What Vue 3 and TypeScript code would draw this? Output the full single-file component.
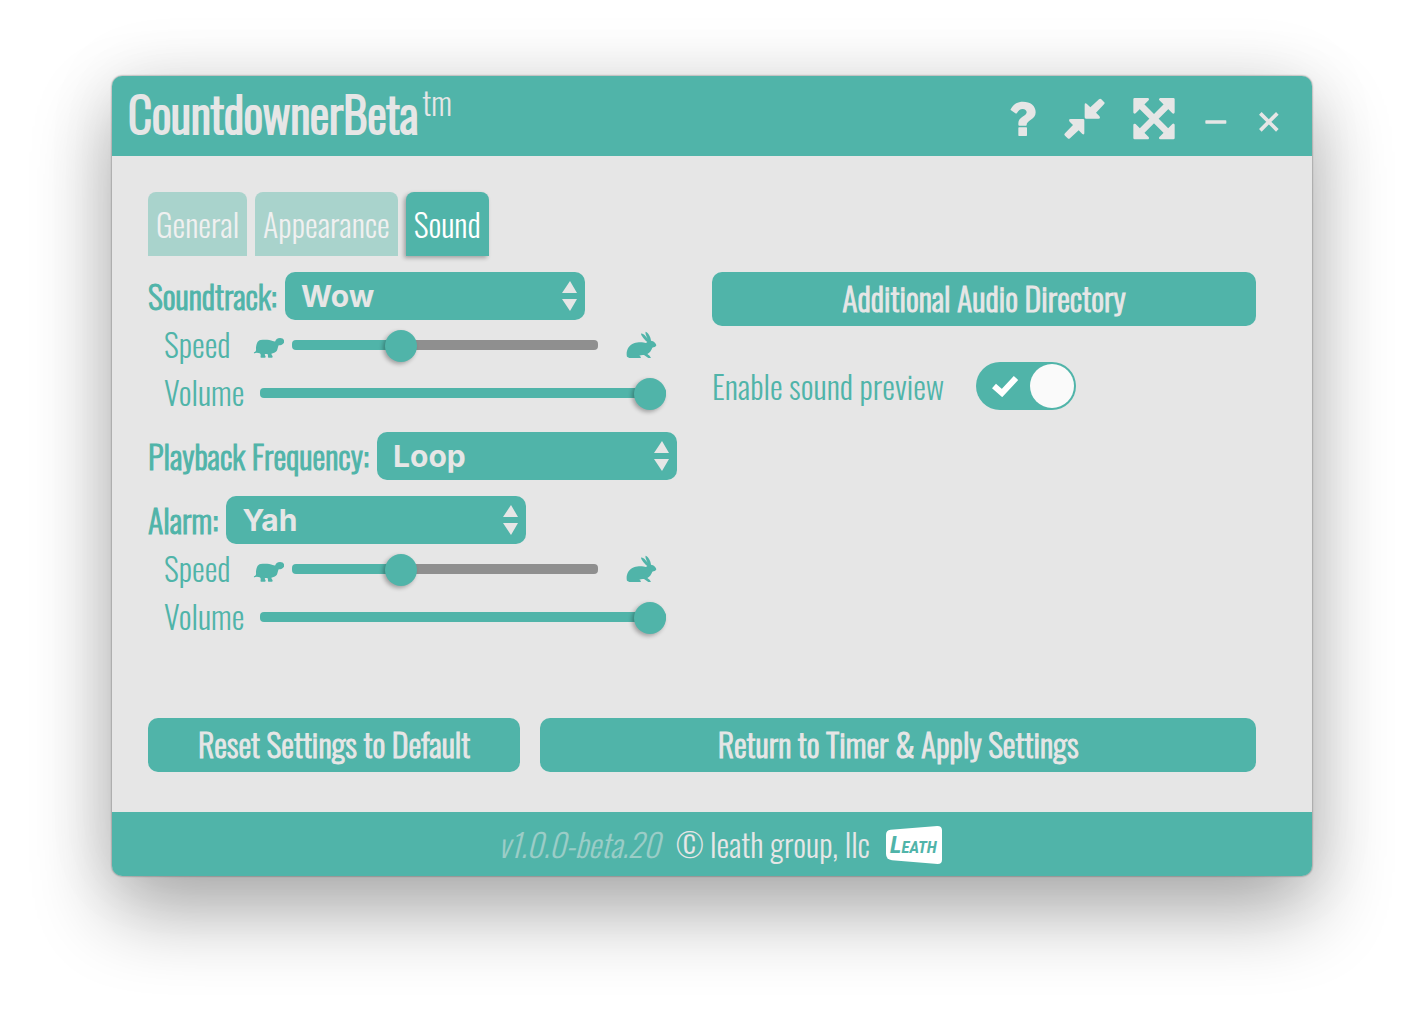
<script setup lang="ts">
import { reactive, ref } from 'vue'

interface Channel {
  id: string
  label: string
  options: string[]
  value: string
  speed: number
  volume: number
}

const tabs = ['General', 'Appearance', 'Sound']
const activeTab = ref('Sound')
const preview = ref(true)
const frequency = ref('Loop')
const frequencies = ['Loop', 'Once']

const channels = reactive<Channel[]>([
  { id: 'soundtrack', label: 'Soundtrack:', options: ['Wow', 'None'], value: 'Wow', speed: 100, volume: 100 },
  { id: 'alarm', label: 'Alarm:', options: ['Yah', 'None'], value: 'Yah', speed: 100, volume: 100 },
])

const fill = (value: number, min: number, max: number) => {
  const share = ((value - min) / (max - min)) * 100
  return { '--fill': `${share}%` }
}
</script>

<template>
  <div class="desktop">
    <div class="window">
      <header class="titlebar">
        <h1 class="brand">CountdownerBeta<sup class="mark">tm</sup></h1>
        <div class="controls">
          <button type="button" class="control" aria-label="Help">
            <svg width="26" height="48" viewBox="62 66 78 144">
              <path d="M64 118C72 103 84 95 101 95C123 95 139 107 139 127C139 150 112 150 112 165Q112 167 110 167H90Q87 167 87 164V160C87 140 112 139 112 127C112 121 107 117 100 117C92 117 88 121 83 129Q81 132 78 130L65 121Q63 120 64 118Z" />
              <rect x="87" y="172" width="26" height="26" rx="2" />
            </svg>
          </button>
          <button type="button" class="control" aria-label="Compact size">
            <svg width="41" height="48" viewBox="223 66 123 144">
              <g id="inward">
                <path d="M285 104Q285 97 291 101L302 112L328 88Q332 85 335 88L343 96Q347 99 343 103L319 128L329 138Q334 146 326 146H289Q285 146 285 142Z" />
              </g>
              <use href="#inward" transform="rotate(180 284.5 146.5)" />
            </svg>
          </button>
          <button type="button" class="control" aria-label="Full screen">
            <svg width="42" height="48" viewBox="428 66 126 144">
              <path d="M454 109L528 183M528 109L454 183" fill="none" stroke="#e6e6e6" stroke-width="20" />
              <path d="M433 88H472L433 127ZM549 88V127L510 88ZM433 204V165L472 204ZM549 204H510L549 165Z" stroke="#e6e6e6" stroke-width="8" stroke-linejoin="round" />
            </svg>
          </button>
          <button type="button" class="control" aria-label="Minimize">
            <svg width="26" height="48" viewBox="638 66 78 144">
              <rect x="645" y="151" width="63" height="10" rx="2" />
            </svg>
          </button>
          <button type="button" class="control" aria-label="Close">
            <svg width="24" height="48" viewBox="802 66 72 144">
              <path d="M812 130L863 181M863 130L812 181" fill="none" stroke="#e6e6e6" stroke-width="11" />
            </svg>
          </button>
        </div>
      </header>

      <main class="content">
        <nav class="tabs" role="tablist">
          <button
            v-for="tab in tabs"
            :key="tab"
            type="button"
            role="tab"
            class="tab"
            :class="{ active: tab === activeTab }"
            :aria-selected="tab === activeTab"
            @click="activeTab = tab"
          >{{ tab }}</button>
        </nav>

        <div class="columns">
          <div class="column">
            <template v-for="(channel, index) in channels" :key="channel.id">
              <section class="group">
                <div class="field">
                  <label class="field-label" :for="channel.id">{{ channel.label }}</label>
                  <span class="picker">
                    <select :id="channel.id" v-model="channel.value" class="select">
                      <option v-for="option in channel.options" :key="option">{{ option }}</option>
                    </select>
                    <svg class="arrows" width="15" height="30" viewBox="0 0 15 30">
                      <path d="M8 0L15 12H0ZM0 18H15L8 30Z" />
                    </svg>
                  </span>
                </div>
                <div class="slider-row">
                  <label class="slider-label" :for="`${channel.id}-speed`">Speed</label>
                  <svg class="animal" width="32" height="32" viewBox="0 0 96 96">
                    <path d="M7 70C5 69 5 66 8 66Q13 65 12 58C12 44 16 31 26 30C38 28 54 29 62 33Q67 35 70 34C71 28 76 24 84 24C92 24 97 29 97 35C96 42 88 46 80 46C77 52 77 59 74 63C70 68 64 70 58 71C58 75 62 76 62 80Q62 83 59 83H49C46 80 50 76 46 72H39C37 76 41 77 41 80Q41 83 38 83H27Q25 82 26 77Q27 72 23 70Q14 67 7 70Z" />
                  </svg>
                  <input
                    :id="`${channel.id}-speed`"
                    v-model.number="channel.speed"
                    class="slider"
                    type="range"
                    min="50"
                    max="198"
                    :style="fill(channel.speed, 50, 198)"
                  />
                  <svg class="animal rabbit" width="32" height="32" viewBox="0 0 96 96">
                    <path d="M3 80C-1 66 6 46 24 40C38 35 52 37 60 39L64 36C56 29 46 18 45 11C51 9 58 17 65 26C60 16 57 9 59 5C67 8 74 20 75 32C83 33 91 40 91 46C90 51 83 52 79 53C76 62 70 69 64 72Q72 77 75 84H67L54 75Q46 74 40 77Q46 80 44 84H10Q8 82 3 80Z" />
                  </svg>
                </div>
                <div class="slider-row">
                  <label class="slider-label" :for="`${channel.id}-volume`">Volume</label>
                  <input
                    :id="`${channel.id}-volume`"
                    v-model.number="channel.volume"
                    class="slider volume"
                    type="range"
                    min="0"
                    max="100"
                    :style="fill(channel.volume, 0, 100)"
                  />
                </div>
              </section>

              <div v-if="index === 0" class="field">
                <label class="field-label" for="frequency">Playback Frequency:</label>
                <span class="picker">
                  <select id="frequency" v-model="frequency" class="select">
                    <option v-for="option in frequencies" :key="option">{{ option }}</option>
                  </select>
                  <svg class="arrows" width="15" height="30" viewBox="0 0 15 30">
                    <path d="M8 0L15 12H0ZM0 18H15L8 30Z" />
                  </svg>
                </span>
              </div>
            </template>
          </div>

          <div class="column side">
            <button type="button" class="action">Additional Audio Directory</button>
            <div class="toggle-row">
              <label for="preview">Enable sound preview</label>
              <span class="toggle">
                <input id="preview" v-model="preview" type="checkbox" class="switch" />
                <svg v-if="preview" class="check" width="28" height="22" viewBox="0 0 28 22">
                  <path d="M3 11L11 18L25 3" />
                </svg>
              </span>
            </div>
          </div>
        </div>

        <div class="actions">
          <button type="button" class="action">Reset Settings to Default</button>
          <button type="button" class="action">Return to Timer &amp; Apply Settings</button>
        </div>
      </main>

      <footer class="footer">
        <span class="version">v1.0.0-beta.20</span>
        <span>© leath group, llc</span>
        <svg class="logo" width="56" height="38" viewBox="0 0 168 114" role="img" aria-label="Leath">
          <path d="M14 11L154 0Q168 0 168 13V102Q168 114 155 114L18 103Q0 100 0 84V26Q0 13 14 11Z" fill="#fff" />
          <text class="logo-text" x="12" y="80" font-size="74">L<tspan font-size="50">EATH</tspan></text>
        </svg>
      </footer>
    </div>
  </div>
</template>

<style>
body {
  margin: 0;
  background: #fff;
}
</style>

<style scoped>
.desktop {
  box-sizing: border-box;
  display: flex;
  min-height: 100vh;
  padding: 76px 112px 148px;
  font-family: Oswald, "Roboto Condensed", sans-serif;
  font-size: 32px;
  font-weight: 300;
  line-height: 48px;
  color: #50b4a9;
}

.window {
  flex: 1;
  display: flex;
  flex-direction: column;
  border-radius: 10px;
  background: #e6e6e6;
  box-shadow:
    0 0 2px rgba(0, 0, 0, 0.6),
    0 36px 80px rgba(0, 0, 0, 0.32),
    0 0 72px rgba(0, 0, 0, 0.08);
}

button,
select {
  border: 0;
  font: inherit;
  cursor: pointer;
}

.titlebar {
  display: flex;
  justify-content: space-between;
  align-items: center;
  height: 80px;
  padding: 0 31px 0 16px;
  border-radius: 10px 10px 0 0;
  background: #50b4a9;
  color: #e6e6e6;
}

.brand {
  margin: 0;
  padding-bottom: 6px;
  font-size: 48px;
  font-weight: 300;
  line-height: 72px;
  -webkit-text-stroke: 2px currentColor;
}

.mark {
  margin-left: 4px;
  font-size: 32px;
  line-height: 0;
  vertical-align: 18px;
  -webkit-text-stroke: 0;
}

.controls {
  display: flex;
  gap: 28px;
}

.control {
  display: flex;
  padding: 0;
  background: none;
}

.control svg {
  display: block;
  fill: #e6e6e6;
}

.content {
  flex: 1;
  display: flex;
  flex-direction: column;
  padding: 36px 56px 40px 36px;
}

.tabs {
  display: flex;
  gap: 8px;
}

.tab {
  height: 64px;
  padding: 0 8px;
  border-radius: 8px 8px 0 0;
  background: #a9d3cc;
  color: #f0f0f0;
}

.tab.active {
  background: #50b4a9;
  color: #fff;
  box-shadow: -2px 2px 4px rgba(0, 0, 0, 0.3);
}

.columns {
  display: grid;
  grid-template-columns: 1fr 1fr;
  gap: 20px;
  padding: 16px 0;
}

.column {
  display: flex;
  flex-direction: column;
  gap: 16px;
}

.side {
  gap: 36px;
}

.field {
  display: flex;
  gap: 8px;
}

.field-label {
  white-space: nowrap;
  -webkit-text-stroke: 1px currentColor;
}

.picker {
  position: relative;
  display: block;
  width: 300px;
}

.select {
  appearance: none;
  display: block;
  width: 100%;
  height: 48px;
  padding: 0 32px 0 16px;
  border-radius: 10px;
  background: #50b4a9;
  color: #e6e6e6;
  font-family: Inter, sans-serif;
  font-size: 30px;
  font-weight: 700;
}

.arrows {
  position: absolute;
  top: 9px;
  right: 8px;
  fill: #e6e6e6;
  pointer-events: none;
}

.slider-row {
  display: flex;
  align-items: center;
  height: 48px;
  padding: 0 26px 0 16px;
}

.slider-label {
  flex: none;
  width: 80px;
}

.animal {
  flex: none;
  margin: 4px 0 0 8px;
  fill: #50b4a9;
}

.rabbit {
  margin-left: 28px;
  margin-right: 8px;
}

.slider {
  appearance: none;
  flex: 1;
  min-width: 0;
  height: 32px;
  margin: 2px 0 0 8px;
  background: none;
}

.slider.volume {
  margin-left: 16px;
}

.slider::-webkit-slider-runnable-track {
  height: 10px;
  border-radius: 4px;
  background: linear-gradient(to right, #50b4a9 var(--fill), #8f8f8f var(--fill));
}

.slider::-webkit-slider-thumb {
  appearance: none;
  width: 32px;
  height: 32px;
  margin-top: -10px;
  border-radius: 50%;
  background: #50b4a9;
  box-shadow: -2px 2px 4px rgba(0, 0, 0, 0.3);
}

.action {
  height: 54px;
  padding: 0 16px 2px;
  border-radius: 10px;
  background: #50b4a9;
  color: #e6e6e6;
  -webkit-text-stroke: 1px currentColor;
}

.toggle-row {
  display: flex;
  align-items: center;
  gap: 32px;
}

.toggle {
  position: relative;
  display: block;
  height: 48px;
}

.switch {
  appearance: none;
  display: flex;
  justify-content: flex-start;
  box-sizing: border-box;
  width: 100px;
  height: 48px;
  margin: 0;
  padding: 2px;
  border-radius: 24px;
  background: #8f8f8f;
}

.switch:checked {
  justify-content: flex-end;
  background: #50b4a9;
}

.switch::after {
  content: "";
  width: 44px;
  height: 44px;
  border-radius: 50%;
  background: #fafafa;
}

.check {
  position: absolute;
  top: 13px;
  left: 15px;
  fill: none;
  stroke: #fff;
  stroke-width: 6;
  pointer-events: none;
}

.actions {
  display: grid;
  grid-template-columns: 13fr 25fr;
  gap: 20px;
  margin-top: auto;
}

.footer {
  display: flex;
  justify-content: center;
  align-items: center;
  gap: 16px;
  height: 64px;
  padding-left: 16px;
  border-radius: 0 0 10px 10px;
  background: #50b4a9;
  color: #e6e6e6;
}

.logo {
  margin-top: 2px;
}

.version {
  font-style: italic;
  opacity: 0.5;
}

.logo-text {
  fill: #50b4a9;
  font-family: "Roboto Condensed", sans-serif;
  font-style: italic;
  font-weight: 700;
}
</style>
